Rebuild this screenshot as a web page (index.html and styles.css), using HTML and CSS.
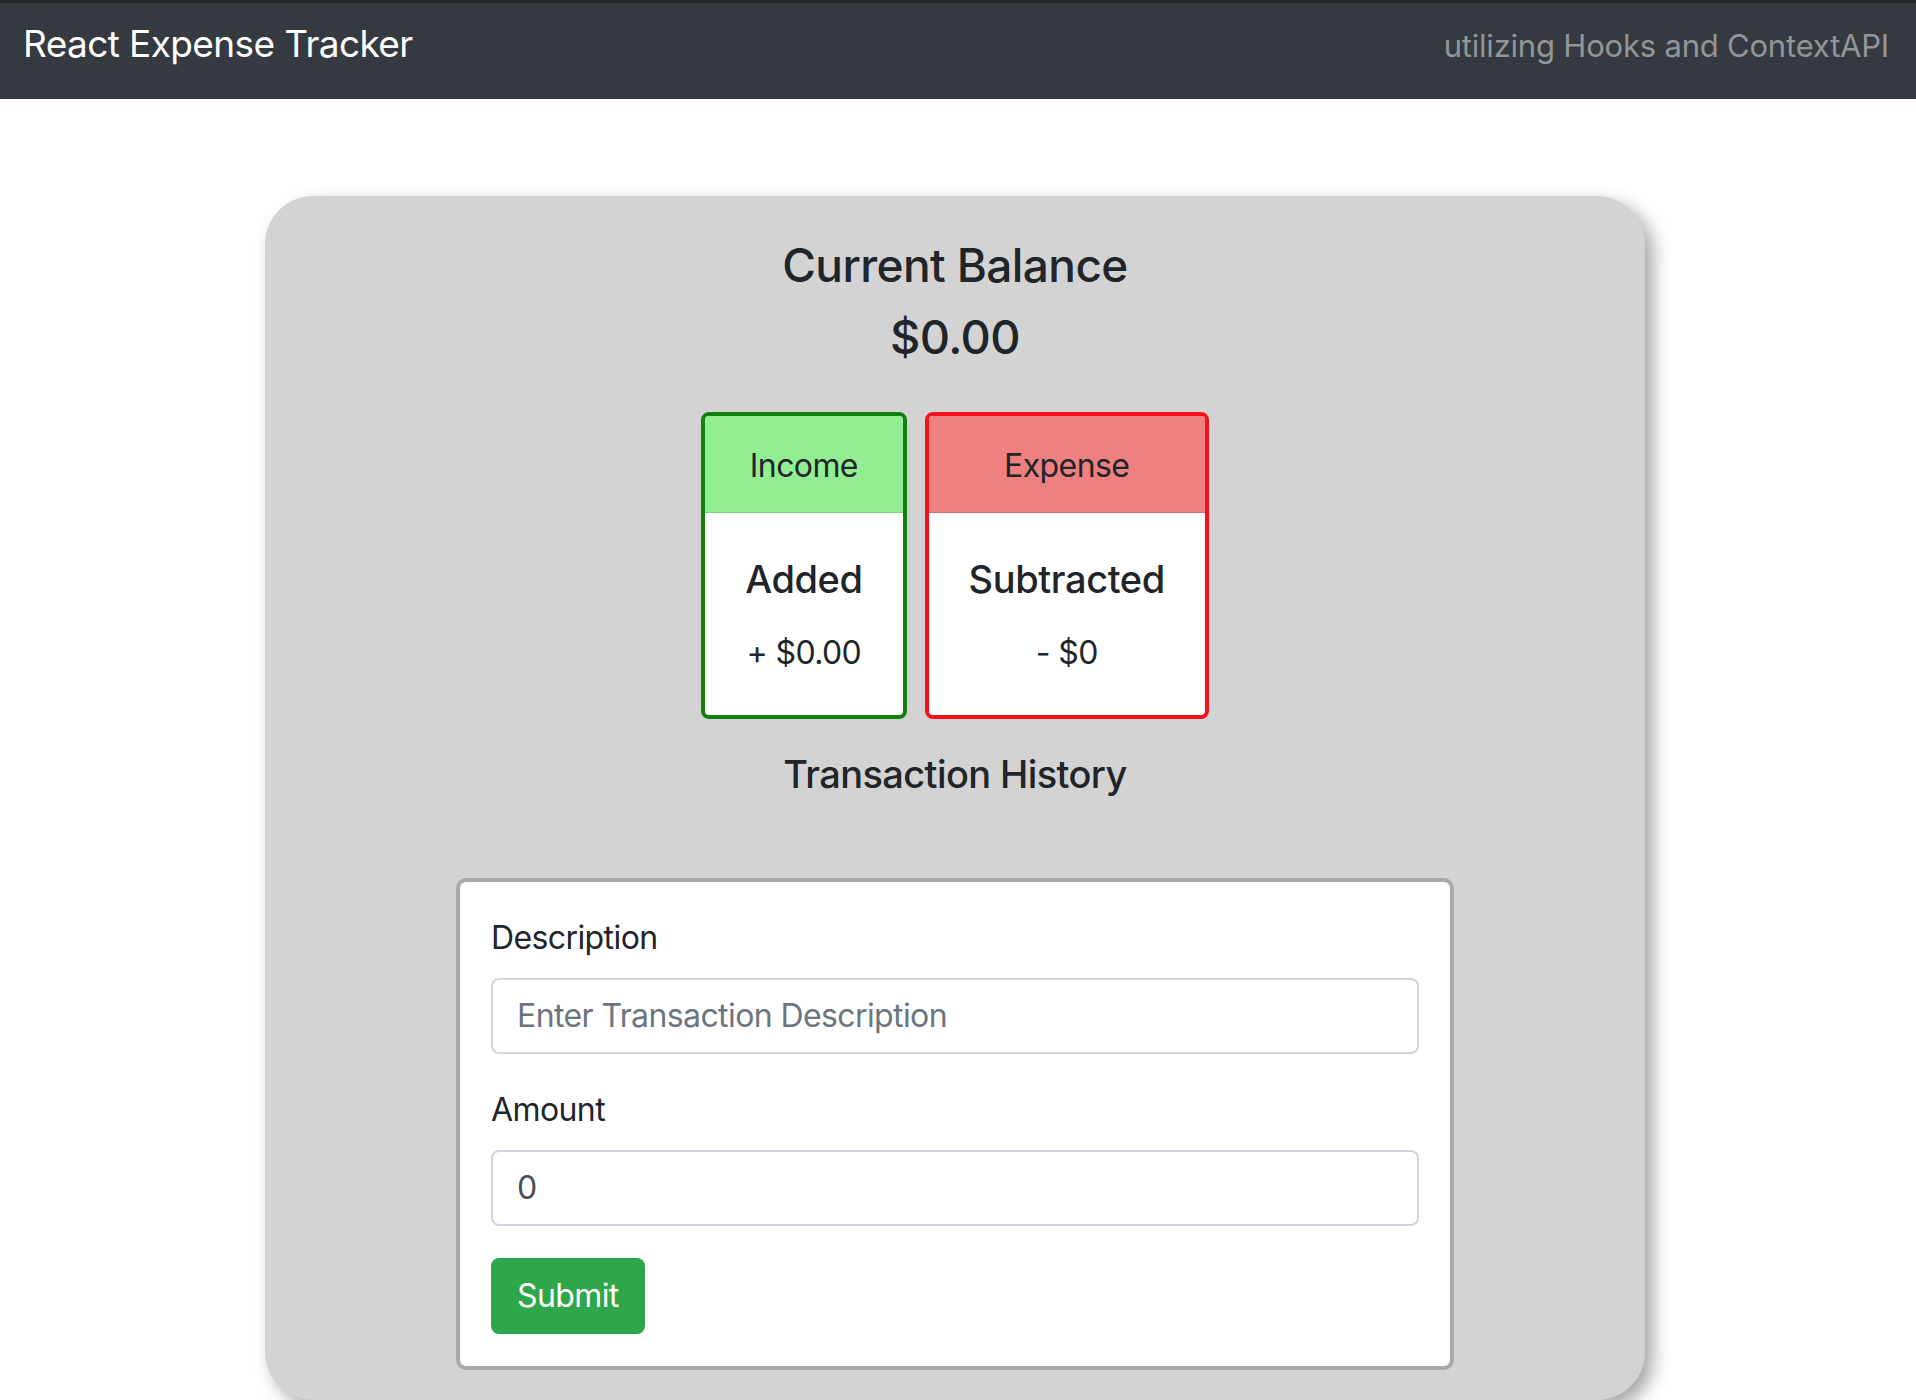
FILE: index.html
```html
<!DOCTYPE html>
<html lang="en">
<head>
<meta charset="utf-8">
<title>React Expense Tracker</title>
<link rel="stylesheet" href="styles.css">
</head>
<body>
<nav class="navbar">
  <span class="brand">React Expense Tracker</span>
  <span class="tagline">utilizing Hooks and ContextAPI</span>
</nav>
<main class="container">
  <section class="panel">
    <h4 class="balance-title">Current Balance</h4>
    <h4 class="balance-amount">$0.00</h4>
    <div class="summary">
      <div class="tile tile-income">
        <div class="tile-header">Income</div>
        <div class="tile-body">
          <h5 class="tile-title">Added</h5>
          <p class="tile-text">+ $0.00</p>
        </div>
      </div>
      <div class="tile tile-expense">
        <div class="tile-header">Expense</div>
        <div class="tile-body">
          <h5 class="tile-title">Subtracted</h5>
          <p class="tile-text">- $0</p>
        </div>
      </div>
    </div>
    <h5 class="history-title">Transaction History</h5>
    <ul class="history"></ul>
    <form class="form-card">
      <div class="form-group">
        <label class="form-label" for="desc">Description</label>
        <input class="form-control" id="desc" type="text" placeholder="Enter Transaction Description">
      </div>
      <div class="form-group">
        <label class="form-label" for="amount">Amount</label>
        <input class="form-control" id="amount" type="number" value="0">
      </div>
      <button class="btn-submit" type="button">Submit</button>
    </form>
  </section>
</main>
</body>
</html>
```

FILE: styles.css
```css
* { box-sizing: border-box; }

html, body {
  margin: 0;
  padding: 0;
  background: #ffffff;
}

body {
  font-family: Inter, "Noto Sans", "Liberation Sans", sans-serif;
  color: #212529;
  font-size: 32px;
  line-height: 1.5;
  letter-spacing: -0.6px;
}

.navbar {
  height: 99px;
  background: #343a40;
  border-top: 3px solid #222428;
  display: flex;
  align-items: baseline;
  justify-content: space-between;
  padding: 19px 27px 0 23px;
}

.brand {
  color: #ffffff;
  font-size: 37px;
  line-height: 1.2;
  letter-spacing: -0.6px;
}

.tagline {
  color: rgba(255, 255, 255, 0.47);
  font-size: 31px;
  line-height: 1.2;
  letter-spacing: -0.2px;
}

.container {
  width: 1380px;
  margin: 97px 0 0 calc(50% - 693px);
}

.panel {
  background: #d3d3d3;
  border-radius: 48px;
  box-shadow: 8px 8px 18px rgba(0, 0, 0, 0.35);
  padding: 42px 0 30px;
  text-align: center;
}

.balance-title,
.balance-amount {
  margin: 0;
  font-size: 46px;
  font-weight: 500;
  line-height: 1.2;
  letter-spacing: -0.6px;
}

.balance-amount {
  margin-top: 16px;
  font-size: 47px;
}

.summary {
  display: flex;
  justify-content: center;
  align-items: flex-start;
  gap: 18px;
  margin-top: 46px;
}

.tile {
  background: #ffffff;
  border-radius: 8px;
  border: 4px solid;
  overflow: hidden;
}

.tile-income { border-color: #108010; }
.tile-expense { border-color: #f5101e; }

.tile-header {
  padding: 26px 40px 22px;
  line-height: 48px;
  border-bottom: 1px solid rgba(0, 0, 0, 0.12);
}

.tile-income .tile-header { background: #93ed93; }
.tile-expense .tile-header { background: #ef8080; }

.tile-body {
  padding: 42px 40px 38px;
}

.tile-title {
  margin: 0 0 26px;
  font-size: 38px;
  font-weight: 500;
  line-height: 48px;
  letter-spacing: -0.4px;
}

.tile-text {
  margin: 0;
  line-height: 48px;
}

.history-title {
  margin: 31px 0 0;
  font-size: 38px;
  font-weight: 500;
  line-height: 48px;
  letter-spacing: -0.6px;
}

.history {
  margin: 0;
  padding: 0;
  list-style: none;
  height: 80px;
}

.form-card {
  width: 998px;
  margin: 0 auto;
  background: #ffffff;
  border: 4px solid #a9a9a9;
  border-radius: 10px;
  padding: 32px 31px;
  text-align: left;
}

.form-group {
  margin-bottom: 32px;
}

.form-label {
  display: block;
  margin-bottom: 16px;
  line-height: 48px;
}

.form-control {
  display: block;
  width: 100%;
  height: 76px;
  padding: 12px 24px;
  font-family: inherit;
  font-size: 32px;
  line-height: 48px;
  letter-spacing: -0.6px;
  color: #495057;
  background: #ffffff;
  border: 2px solid #ced4da;
  border-radius: 8px;
  outline: none;
  -moz-appearance: textfield;
}

.form-control::-webkit-outer-spin-button,
.form-control::-webkit-inner-spin-button {
  -webkit-appearance: none;
  margin: 0;
}

.form-control::placeholder {
  color: #6c757d;
  opacity: 1;
}

.btn-submit {
  display: inline-block;
  height: 76px;
  padding: 12px 24px;
  font-family: inherit;
  font-size: 32px;
  line-height: 48px;
  letter-spacing: -0.6px;
  color: #ffffff;
  background: #2ea64a;
  border: 2px solid #2ea64a;
  border-radius: 8px;
  cursor: pointer;
}
```
